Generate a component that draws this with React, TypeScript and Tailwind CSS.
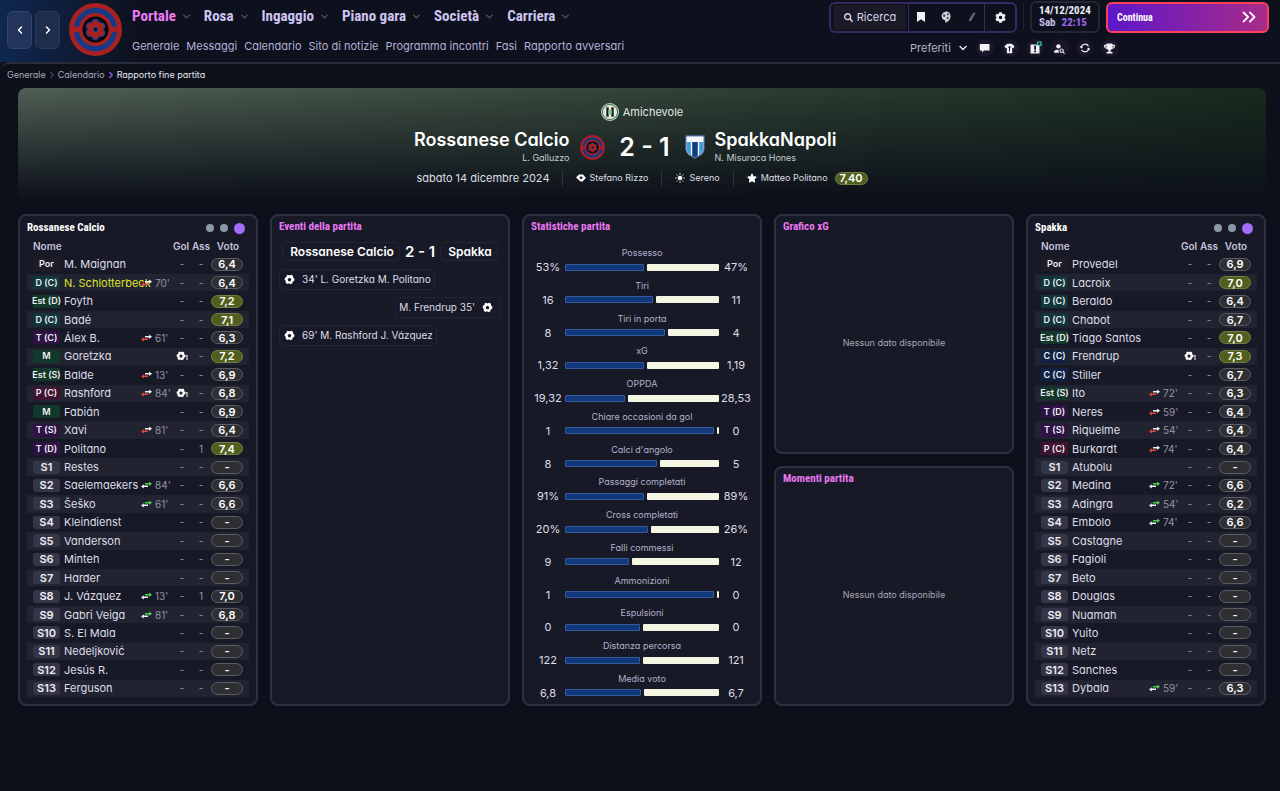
import type { ReactNode } from 'react';
import { ChevronDown, ChevronLeft, ChevronRight, ChevronsRight } from 'lucide-react';
import { FaSearch, FaStar, FaTrophy, FaCog } from 'react-icons/fa';
import { MdPersonSearch } from 'react-icons/md';

const CONDENSED = "font-['Roboto_Condensed','Liberation_Sans_Narrow','Open_Sans_Condensed','Liberation_Sans',sans-serif]";

type Player = {
  pos: string;
  name: string;
  minute?: string;
  goals?: string;
  assists?: string;
  rating: string;
  booked?: boolean;
};

const HOME: Player[] = [
  { pos: 'Por', name: 'M. Maignan', rating: '6,4' },
  { pos: 'D (C)', name: 'N. Schlotterbeck', minute: "70'", rating: '6,4', booked: true },
  { pos: 'Est (D)', name: 'Foyth', rating: '7,2' },
  { pos: 'D (C)', name: 'Badé', rating: '7,1' },
  { pos: 'T (C)', name: 'Álex B.', minute: "61'", rating: '6,3' },
  { pos: 'M', name: 'Goretzka', goals: '1', rating: '7,2' },
  { pos: 'Est (S)', name: 'Balde', minute: "13'", rating: '6,9' },
  { pos: 'P (C)', name: 'Rashford', minute: "84'", goals: '1', rating: '6,8' },
  { pos: 'M', name: 'Fabián', rating: '6,9' },
  { pos: 'T (S)', name: 'Xavi', minute: "81'", rating: '6,4' },
  { pos: 'T (D)', name: 'Politano', assists: '1', rating: '7,4' },
  { pos: 'S1', name: 'Restes', rating: '-' },
  { pos: 'S2', name: 'Saelemaekers', minute: "84'", rating: '6,6' },
  { pos: 'S3', name: 'Šeško', minute: "61'", rating: '6,6' },
  { pos: 'S4', name: 'Kleindienst', rating: '-' },
  { pos: 'S5', name: 'Vanderson', rating: '-' },
  { pos: 'S6', name: 'Minteh', rating: '-' },
  { pos: 'S7', name: 'Harder', rating: '-' },
  { pos: 'S8', name: 'J. Vázquez', minute: "13'", assists: '1', rating: '7,0' },
  { pos: 'S9', name: 'Gabri Veiga', minute: "81'", rating: '6,8' },
  { pos: 'S10', name: 'S. El Mala', rating: '-' },
  { pos: 'S11', name: 'Nedeljković', rating: '-' },
  { pos: 'S12', name: 'Jesús R.', rating: '-' },
  { pos: 'S13', name: 'Ferguson', rating: '-' },
];

const AWAY: Player[] = [
  { pos: 'Por', name: 'Provedel', rating: '6,9' },
  { pos: 'D (C)', name: 'Lacroix', rating: '7,0' },
  { pos: 'D (C)', name: 'Beraldo', rating: '6,4' },
  { pos: 'D (C)', name: 'Chabot', rating: '6,7' },
  { pos: 'Est (D)', name: 'Tiago Santos', rating: '7,0' },
  { pos: 'C (C)', name: 'Frendrup', goals: '1', rating: '7,3' },
  { pos: 'C (C)', name: 'Stiller', rating: '6,7' },
  { pos: 'Est (S)', name: 'Ito', minute: "72'", rating: '6,3' },
  { pos: 'T (D)', name: 'Neres', minute: "59'", rating: '6,4' },
  { pos: 'T (S)', name: 'Riquelme', minute: "54'", rating: '6,4' },
  { pos: 'P (C)', name: 'Burkardt', minute: "74'", rating: '6,4' },
  { pos: 'S1', name: 'Atubolu', rating: '-' },
  { pos: 'S2', name: 'Medina', minute: "72'", rating: '6,6' },
  { pos: 'S3', name: 'Adingra', minute: "54'", rating: '6,2' },
  { pos: 'S4', name: 'Embolo', minute: "74'", rating: '6,6' },
  { pos: 'S5', name: 'Castagne', rating: '-' },
  { pos: 'S6', name: 'Fagioli', rating: '-' },
  { pos: 'S7', name: 'Beto', rating: '-' },
  { pos: 'S8', name: 'Douglas', rating: '-' },
  { pos: 'S9', name: 'Nuamah', rating: '-' },
  { pos: 'S10', name: 'Yuito', rating: '-' },
  { pos: 'S11', name: 'Netz', rating: '-' },
  { pos: 'S12', name: 'Sanches', rating: '-' },
  { pos: 'S13', name: 'Dybala', minute: "59'", rating: '6,3' },
];

// label, home value, away value, home share of the bar
const STATS: [string, string, string, number][] = [
  ['Possesso', '53%', '47%', 0.52],
  ['Tiri', '16', '11', 0.58],
  ['Tiri in porta', '8', '4', 0.655],
  ['xG', '1,32', '1,19', 0.515],
  ['OPPDA', '19,32', '28,53', 0.39],
  ['Chiare occasioni da gol', '1', '0', 1],
  ["Calci d'angolo", '8', '5', 0.607],
  ['Passaggi completati', '91%', '89%', 0.52],
  ['Cross completati', '20%', '26%', 0.545],
  ['Falli commessi', '9', '12', 0.415],
  ['Ammonizioni', '1', '0', 1],
  ['Espulsioni', '0', '0', 0.49],
  ['Distanza percorsa', '122', '121', 0.49],
  ['Media voto', '6,8', '6,7', 0.495],
];

const MAIN_NAV = ['Portale', 'Rosa', 'Ingaggio', 'Piano gara', 'Società', 'Carriera'];
const SUB_NAV = ['Generale', 'Messaggi', 'Calendario', 'Sito di notizie', 'Programma incontri', 'Fasi', 'Rapporto avversari'];

function Crest({ className }: { className: string }) {
  return (
    <svg viewBox="0 0 52 52" className={className} aria-hidden="true">
      <circle cx="26" cy="26" r="26" fill="#a82120" />
      <circle cx="26" cy="26" r="18.8" fill="none" stroke="#183a86" strokeWidth="5.2" />
      <path d="M2 23.4h9v5.2H2zM41 23.4h9v5.2h-9z" fill="#a82120" />
      <circle cx="26" cy="26" r="12.8" fill="#07060d" />
      <g stroke="#1c3f8c" strokeWidth="1.4" fill="#a82120">
        {[0, 60, 120, 180, 240, 300].map((a) => (
          <circle key={a} cx="26" cy="19.6" r="3.4" transform={`rotate(${a} 26 26)`} />
        ))}
      </g>
      <circle cx="26" cy="26" r="7.6" fill="#a82120" />
      <circle cx="26" cy="26" r="2" fill="#07060d" stroke="#1c3f8c" strokeWidth="1.2" />
    </svg>
  );
}

function ShieldCrest({ className }: { className: string }) {
  return (
    <svg viewBox="0 0 20 24" className={className} aria-hidden="true">
      <path d="M.6.6h18.8v13.2c0 4.6-4 7.4-9.4 9.6C4.6 21.2.6 18.4.6 13.8z" fill="#f4f5f6" />
      <path d="M1.8 7h16.4v7c0 3.8-3.4 6.2-8.2 8.2C5.2 20.2 1.8 17.8 1.8 14z" fill="#3b9ed6" />
      <path d="M7.3 7h5.4v14l-2.7 1.2L7.3 21z" fill="#173a7e" />
      <path d="M5.8 7h1.3v13.8l-1.3-.7zM12.9 7h1.3v13.1l-1.3.7z" fill="#f4f5f6" />
      <path d="M.9.9h18.200v12.900c0 4.400-3.900 7-9.100 9.200C4.800 20.800.9 18.200.9 13.800z" fill="none" stroke="#1b3f82" strokeWidth="1" />
      <path d="M1.8 1.8h16.4V6H1.8z" fill="#f4f5f6" />
    </svg>
  );
}

function CompetitionBadge() {
  return (
    <svg viewBox="0 0 18 18" className="size-[18px]" aria-hidden="true">
      <circle cx="9" cy="9" r="9" fill="#b9d2bb" />
      <circle cx="9" cy="9" r="7.6" fill="none" stroke="#3c5a42" strokeWidth=".8" />
      <circle cx="9" cy="9" r="6.6" fill="#e4eee4" />
      <path d="M5.3 4.3h2.4v9.4H5.3zM10.3 4.3h2.4v9.4h-2.4z" fill="#16201a" />
      <circle cx="9" cy="9" r="2.2" fill="#7fbf8a" />
    </svg>
  );
}

function Ball({ className = 'size-[11px]' }: { className?: string }) {
  return (
    <svg viewBox="0 0 12 12" className={className} aria-hidden="true">
      <path
        fill="#fff"
        fillRule="evenodd"
        d="M4.2.7l1.8.9 1.900-.9 1.900 1.200.1 1.900 1.500 1.300-.3 2.200-1.600 1-.4 1.900-2.100.9L5.500 10.200l-2 .6-1.700-1.500.2-1.700L.6 6.200l.6-2 1.500-.8L2.900 1.600zM6 4L4 5.500l.7 2.300h2.600L8 5.500z"
      />
    </svg>
  );
}

function SwapIcon({ on }: { on: boolean }) {
  return (
    <svg viewBox="0 0 11 8" className="h-2 w-[11px] shrink-0" role="img" aria-label={on ? 'Entrato' : 'Sostituito'}>
      <path d="M4 1.900h4.200V.5L11 2.700 8.200 4.900V3.400H4z" fill={on ? '#45d34f' : '#f2f2f4'} />
      <path d="M7 4.600H2.800V3.200L0 5.400l2.800 2.200V6.100H7z" fill={on ? '#f2f2f4' : '#e8453f'} />
    </svg>
  );
}

function posClass(pos: string) {
  if (pos.startsWith('S')) return 'bg-[#343546] text-[11px] rounded-[3px]';
  if (pos === 'Por') return 'bg-[#1f1c28] text-[9px]';
  if (pos.startsWith('D')) return 'bg-[#11363a] text-[9px]';
  if (pos.startsWith('T')) return 'bg-[#2d1243] text-[9px]';
  if (pos.startsWith('P')) return 'bg-[#421331] text-[9px]';
  if (pos.startsWith('C')) return 'bg-[#0f2243] text-[9px]';
  return 'bg-[#12382a] text-[9px]';
}

function ratingClass(rating: string, starter: boolean) {
  if (starter && rating.startsWith('7')) return 'bg-[#505f1e] border-[#747f45]';
  return 'bg-[#2e2f33] border-[#5c5d63]';
}

function TeamPanel({ title, players }: { title: string; players: Player[] }) {
  return (
    <section className="flex min-w-0 flex-col rounded-lg border-2 border-[#2f303f] bg-[#181926] px-[7px] pt-[3px] pb-[6px]">
      <div className="flex h-[18px] items-center justify-between pr-1">
        <h2 className={`${CONDENSED} text-[11px] font-bold text-white`}>{title}</h2>
        <div className="flex items-center gap-1.5">
          <button aria-label="Vista 1" className="size-2 rounded-full bg-[#8b9aa6]" />
          <button aria-label="Vista 2" className="size-2 rounded-full bg-[#8b9aa6]" />
          <button aria-label="Vista 3" className="size-[11px] rounded-full bg-[#a56bff]" />
        </div>
      </div>
      <table className="w-full grow table-fixed border-collapse">
        <colgroup>
          <col className="w-[37px]" />
          <col />
          <col className="w-[32px]" />
          <col className="w-[18px]" />
          <col className="w-[20px]" />
          <col className="w-[38px]" />
        </colgroup>
        <thead>
          <tr className="h-[18px] text-[10px] leading-[14px] text-[#c3c1da]">
            <th className="p-0 pl-1.5 text-left font-semibold">Nome</th>
            <th />
            <th />
            <th className="p-0 pr-1 font-semibold">Gol</th>
            <th className="p-0 font-semibold">Ass</th>
            <th className="p-0 pr-1 font-semibold">Voto</th>
          </tr>
        </thead>
        <tbody>
          {players.map((p, i) => (
            <tr key={p.pos + p.name} className="border-y border-[#181926] text-[10px] leading-[14px] text-[#9394a6] even:bg-[#222330]">
              <td className="p-0 pl-1.5">
                <span className={`flex h-[13px] w-[27px] items-center justify-center font-semibold whitespace-nowrap text-[#eeeef4] ${posClass(p.pos)}`}>
                  {p.pos}
                </span>
              </td>
              <td className={`p-0 text-[11px] whitespace-nowrap ${p.booked ? 'text-[#dfe32e]' : 'text-[#dedee8]'}`}>{p.name}</td>
              <td className="p-0">
                {p.minute && (
                  <span className="flex items-center gap-[3px]">
                    <SwapIcon on={i > 10} />
                    {p.minute}
                  </span>
                )}
              </td>
              <td className="p-0 text-center">
                {p.goals ? (
                  <span className="flex items-center justify-center text-[8px] leading-[10px] font-semibold text-white">
                    <Ball className="size-[10px] shrink-0" />
                    <sub className="-ml-px bottom-[-2px]">{p.goals}</sub>
                  </span>
                ) : (
                  '-'
                )}
              </td>
              <td className="p-0 text-center">{p.assists ?? '-'}</td>
              <td className="p-0">
                <span className={`flex h-[13px] w-8 items-center justify-center rounded-full border text-[11px] font-semibold text-white ${ratingClass(p.rating, i <= 10)}`}>
                  {p.rating}
                </span>
              </td>
            </tr>
          ))}
        </tbody>
      </table>
    </section>
  );
}

function Panel({ title, children }: { title: string; children: ReactNode }) {
  return (
    <section className="flex min-w-0 flex-1 flex-col rounded-lg border-2 border-[#2f303f] bg-[#181926] px-[7px] pt-[2px] pb-[3px]">
      <h2 className={`${CONDENSED} text-[11px] leading-[18px] font-bold text-[#e878f2]`}>{title}</h2>
      {children}
    </section>
  );
}

function EmptyPanel({ title }: { title: string }) {
  return (
    <Panel title={title}>
      <p className="flex flex-1 items-center justify-center text-[9px] text-[#a6a7b8]">Nessun dato disponibile</p>
    </Panel>
  );
}

function StatRow({ label, home, away, share }: { label: string; home: string; away: string; share: number }) {
  return (
    <div className="text-center">
      <div className="text-[9px] leading-[13px] text-[#b3b1cc]">{label}</div>
      <div className="grid grid-cols-[34px_1fr_34px] items-center text-[11px] leading-4 text-[#dedee8]">
        <span>{home}</span>
        <span className="flex h-[7px] gap-[3px]">
          <span className="rounded-[1px] border border-[#35599a] bg-[#12387c]" style={{ flexGrow: share, flexBasis: 0 }} />
          <span className="min-w-[2px] rounded-[1px] bg-[#f5f5e4]" style={{ flexGrow: 1 - share, flexBasis: 0 }} />
        </span>
        <span>{away}</span>
      </div>
    </div>
  );
}

function EventChip({ children, right }: { children: ReactNode; right?: boolean }) {
  return (
    <li
      className={`flex h-[21px] items-center gap-[7px] rounded border border-[#232432] text-[10px] whitespace-nowrap text-[#dedee8] ${
        right ? 'self-end pr-[7px] pl-[3px]' : 'self-start pr-[3px] pl-1'
      }`}
    >
      {children}
    </li>
  );
}

function Favourite({ label, children }: { label: string; children: ReactNode }) {
  return (
    <button aria-label={label} className="flex size-[18px] items-center justify-center rounded-full bg-[#181628] text-[#f0f0f5]">
      {children}
    </button>
  );
}

export default function App() {
  return (
    <div className="flex min-h-screen flex-col bg-[#0c101a] font-['Inter',sans-serif] text-[#dedee8] [font-feature-settings:'cv11']">
      <header className="flex h-[62px] items-start justify-between bg-[linear-gradient(90deg,#0f2750_0,#0d111d_140px)] pr-[11px] pl-[7px]">
        <div className="flex items-start">
          <div className="flex gap-[3px] pt-[11px]">
            <button aria-label="Indietro" className="flex h-[38px] w-[25px] items-center justify-center rounded-md border border-[#32456b] bg-[#22345a]">
              <ChevronLeft className="size-3" strokeWidth={3} color="#fff" />
            </button>
            <button aria-label="Avanti" className="flex h-[38px] w-[25px] items-center justify-center rounded-md border border-[#2b3a59] bg-[#1f2d4a]">
              <ChevronRight className="size-3" strokeWidth={3} color="#fff" />
            </button>
          </div>
          <a href="#club" aria-label="Rossanese Calcio" className="mt-[3px] ml-[9px]">
            <Crest className="size-[53px]" />
          </a>
          <div className="ml-[10px]">
            <nav aria-label="Principale" className={`${CONDENSED} flex h-8 items-center gap-3 text-[15px] font-bold text-[#cfc4f2]`}>
              {MAIN_NAV.map((item, i) => (
                <a key={item} href="#nav" className={`flex items-center gap-[5px] whitespace-nowrap ${i === 0 ? 'text-[#ee7df6]' : ''}`}>
                  {item}
                  <ChevronDown className="size-[11px] text-[#5a5b6c]" strokeWidth={2.5} />
                </a>
              ))}
            </nav>
            <nav aria-label="Secondaria" className="mt-[6px] flex gap-[7px] text-[11px] leading-4 whitespace-nowrap text-[#b7aed8]">
              {SUB_NAV.map((item) => (
                <a key={item} href="#sub">
                  {item}
                </a>
              ))}
            </nav>
          </div>
        </div>

        <div>
          <div className="flex items-center pt-px">
            <div className="flex h-[31px] w-[188px] items-center rounded-md border-2 border-[#37295f] pl-[3px]">
              <button className="flex h-[25px] w-[72px] items-center justify-center gap-1 bg-[#1a1b27] text-[11px] text-[#d9d6ea]">
                <FaSearch className="size-[9px]" />
                Ricerca
              </button>
              <div className="ml-0.5 flex h-full flex-1 items-center justify-around border-x border-[#37295f]">
                <button aria-label="Segnalibri">
                  <svg viewBox="0 0 8 10" className="h-[10px] w-2">
                    <path d="M0 0h8v10L4 7.2 0 10z" fill="#f0f0f5" />
                  </svg>
                </button>
                <button aria-label="Mondo">
                  <svg viewBox="0 0 10 12" className="h-3 w-[10px]">
                    <path d="M5 .5C7.700.5 9.500 2.500 9.500 5c0 3-1.500 4.300-2.500 5.300-.7.800-2 1.200-3 1.200l.5-2L1.500 8 .5 4.800 2 1.800z" fill="#d5d6dc" />
                    <path d="M2.500 3l2 1-.5 2-2-.5zM6 2l2 1-.5 1.500L6 4zM6 6l2 .3-1 2L5.500 8z" fill="#3b3e4a" />
                  </svg>
                </button>
                <button aria-label="Modifica">
                  <svg viewBox="0 0 8 10" className="h-[10px] w-2">
                    <path d="M5.500.3L7.500 1 3.500 8.500 1 9.800 1 7.500z" fill="#62646f" />
                  </svg>
                </button>
              </div>
              <button aria-label="Impostazioni" className="flex w-[30px] justify-center text-[#f0f0f5]">
                <FaCog className="size-[11px]" />
              </button>
            </div>
            <div className="mx-[6px] h-[26px] w-px bg-[#20222f]" />
            <div className={`${CONDENSED} flex h-8 w-[70px] flex-col justify-center rounded-md border-2 border-[#242634] pl-[7px] text-[11px] leading-3 font-bold whitespace-nowrap text-[#eeeef6]`}>
              <span>14/12/2024</span>
              <span className="flex gap-[6px] text-[#c5bce6]">
                Sab <span className="text-[#a06af5]">22:15</span>
              </span>
            </div>
            <button className={`${CONDENSED} ml-[6px] flex h-[31px] w-[163px] items-center justify-between rounded-md border-2 border-[#fb3f5d] bg-[linear-gradient(90deg,#5d17cb,#a92b88)] pr-[7px] pl-[9px] text-[10px] font-bold text-white`}>
              Continua
              <ChevronsRight className="size-[22px]" strokeWidth={2} />
            </button>
          </div>
          <div className="mt-[6px] flex items-center gap-[7px] pl-[81px]">
            <button className="flex items-center gap-[6px] text-[11px] text-[#b7b4cc]">
              Preferiti
              <ChevronDown className="size-3 text-[#e0e0ea]" strokeWidth={3} />
            </button>
            <Favourite label="Messaggi">
              <svg viewBox="0 0 11 10" className="h-[10px] w-[11px]">
                <path d="M.8 1h9.700v6.500H5L3 9.500v-2H.8z" fill="currentColor" />
              </svg>
            </Favourite>
            <Favourite label="Rosa">
              <svg viewBox="0 0 11 11" className="size-[11px]">
                <path d="M3.500.8h4L10.500 3 9.500 5.200l-1.300-.5V10.200H2.800V4.700l-1.300.5L.5 3z" fill="currentColor" />
                <path d="M4.300 3.500h2.400v1L6 5v3.500H5V5l-.7-.5z" fill="#181628" />
              </svg>
            </Favourite>
            <Favourite label="Avvisi">
              <svg viewBox="0 0 14 14" className="size-[14px]">
                <path d="M2.500 3.500h9v9h-9z" fill="currentColor" />
                <path d="M6.200 4.500h1.800v4.200H6.200zM6.200 9.600h1.800v1.700H6.200z" fill="#181628" />
                <path d="M9.700 1h3.300v3.300H9.700z" fill="#0c101a" stroke="#3fc6c8" strokeWidth="1.200" />
              </svg>
            </Favourite>
            <Favourite label="Osservatori">
              <MdPersonSearch className="size-[13px]" />
            </Favourite>
            <Favourite label="Aggiorna">
              <svg viewBox="0 0 10 10" className="size-[10px]" fill="none" stroke="currentColor" strokeWidth="1.200">
                <path d="M1.300 4.200A3.800 3.800 0 0 1 8.400 3.300M8.700 5.800A3.800 3.800 0 0 1 1.600 6.700" />
                <path d="M.3 3.400l1 1.300 1.200-.9M9.700 6.600l-1-1.300-1.200.9" />
              </svg>
            </Favourite>
            <Favourite label="Trofei">
              <FaTrophy className="size-[11px]" />
            </Favourite>
          </div>
        </div>
      </header>

      <div className="flex flex-1 flex-col rounded-tl-[10px] border-t-2 border-[#2a2c3a] bg-[#0c101a]">
        <nav aria-label="Percorso" className="flex h-[22px] items-center gap-px pl-[7px] text-[9px] text-[#a9aabb]">
          <a href="#generale">Generale</a>
          <ChevronRight className="size-[10px] text-[#5d5e70]" strokeWidth={2.5} />
          <a href="#calendario">Calendario</a>
          <ChevronRight className="size-[10px] text-[#9a5cf5]" strokeWidth={3} />
          <span className="text-[#e6e6ee]">Rapporto fine partita</span>
        </nav>

        <main className="flex flex-1 flex-col px-[14px] pb-[85px] pl-[18px]">
          <section className="mt-[2px] flex h-[126px] flex-col rounded-lg bg-[linear-gradient(180deg,transparent_0,#0c101a_112px),linear-gradient(90deg,#4f5f54,#3b4c3f_35%,#26382c_70%,#172a1c)] pt-[15px]">
            <div className="flex items-center justify-center gap-1 text-[11px] text-[#e0e6e2]">
              <CompetitionBadge />
              Amichevole
            </div>
            <div className="mt-[7px] grid grid-cols-[1fr_auto_1fr] items-center">
              <div className="text-right">
                <h1 className="text-[18px] leading-6 font-semibold text-white">Rossanese Calcio</h1>
                <p className="text-[9px] leading-3 text-[#c6cccb]">L. Galluzzo</p>
              </div>
              <div className="flex items-center px-[10px] pt-[2px]">
                <Crest className="size-[25px]" />
                <div className="w-[80px] text-center text-[25px] leading-8 font-semibold text-white">2 - 1</div>
                <ShieldCrest className="h-6 w-5" />
              </div>
              <div>
                <h1 className="text-[18px] leading-6 font-semibold text-white">SpakkaNapoli</h1>
                <p className="text-[9px] leading-3 text-[#c6cccb]">N. Misuraca Hones</p>
              </div>
            </div>
            <div className="mt-[6px] flex items-center justify-center text-[9px] leading-4 text-[#dcdfe2]">
              <span className="pr-3 text-[11px]">sabato 14 dicembre 2024</span>
              <span className="flex items-center gap-1 border-l border-[#30333d] px-[13px]">
                <svg viewBox="0 0 10 8" className="h-2 w-[10px]">
                  <path d="M3 .5h4L10 4 6.500 7.500h-2L0 3.500zM5 2.300L3.200 3.700 5 5.300l2-1.500z" fill="#fff" fillRule="evenodd" />
                </svg>
                Stefano Rizzo
              </span>
              <span className="flex items-center gap-1 border-l border-[#30333d] px-[13px]">
                <svg viewBox="0 0 10 10" className="size-[10px]">
                  <circle cx="5" cy="5" r="2.300" fill="#fff" />
                  <path d="M5 .2v1.500M5 8.300v1.500M.2 5h1.500M8.300 5h1.500M1.600 1.600l1 1M7.400 7.400l1 1M1.600 8.400l1-1M7.400 2.600l1-1" stroke="#fff" strokeWidth=".9" />
                </svg>
                Sereno
              </span>
              <span className="flex items-center gap-1 border-l border-[#30333d] pl-[13px]">
                <FaStar className="size-[10px] text-white" />
                Matteo Politano
                <b className="ml-[3px] flex h-[13px] w-[33px] items-center justify-center rounded-full border border-[#747f45] bg-[#505f1e] text-[11px] font-semibold text-white">
                  7,40
                </b>
              </span>
            </div>
          </section>

          <div className="grid flex-1 grid-cols-5 gap-3">
            <TeamPanel title="Rossanese Calcio" players={HOME} />

            <Panel title="Eventi della partita">
              <div className="mt-[6px] flex items-center justify-center gap-[5px] text-[12px] font-semibold whitespace-nowrap text-white">
                <span className="flex h-[19px] items-center rounded border border-[#232432] pr-[5px] pl-[7px]">Rossanese Calcio</span>
                <span className="text-[15px] leading-[19px]">2 - 1</span>
                <span className="flex h-[19px] items-center rounded border border-[#232432] pr-[5px] pl-[7px]">Spakka</span>
              </div>
              <ul className="mt-2 flex flex-col gap-[7px]">
                <EventChip>
                  <Ball />
                  <span>34' L. Goretzka M. Politano</span>
                </EventChip>
                <EventChip right>
                  <span>M. Frendrup 35'</span>
                  <Ball />
                </EventChip>
                <EventChip>
                  <Ball />
                  <span>69' M. Rashford J. Vázquez</span>
                </EventChip>
              </ul>
            </Panel>

            <Panel title="Statistiche partita">
              <div className="mt-[10px] flex flex-1 flex-col justify-between">
                {STATS.map(([label, home, away, share]) => (
                  <StatRow key={label} label={label} home={home} away={away} share={share} />
                ))}
              </div>
            </Panel>

            <div className="flex min-w-0 flex-col gap-3">
              <EmptyPanel title="Grafico xG" />
              <EmptyPanel title="Momenti partita" />
            </div>

            <TeamPanel title="Spakka" players={AWAY} />
          </div>
        </main>
      </div>
    </div>
  );
}
